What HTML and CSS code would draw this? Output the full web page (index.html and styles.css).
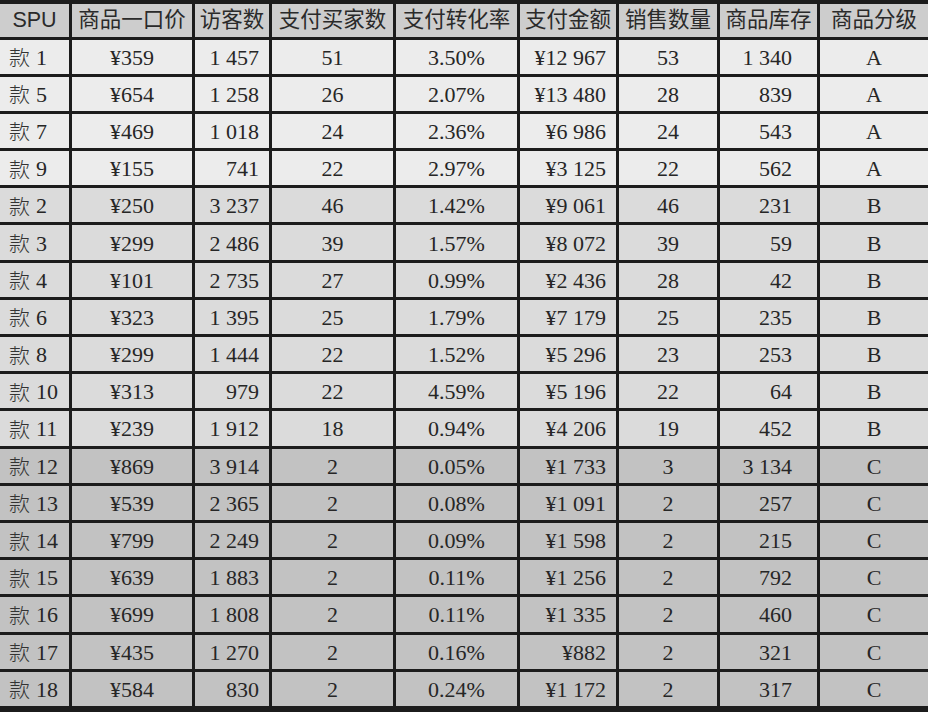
FILE: index.html
```html
<!DOCTYPE html>
<html lang="zh">
<head>
<meta charset="utf-8">
<title>SPU</title>
<link rel="stylesheet" href="styles.css">
</head>
<body>
<div class="table">
  <div class="row head">
    <div class="c spu-h">SPU</div>
    <div class="c">商品一口价</div>
    <div class="c">访客数</div>
    <div class="c">支付买家数</div>
    <div class="c">支付转化率</div>
    <div class="c">支付金额</div>
    <div class="c">销售数量</div>
    <div class="c">商品库存</div>
    <div class="c">商品分级</div>
  </div>
  <div class="row a"><div class="c spu"><span class="k">款</span><span>1</span></div><div class="c">¥359</div><div class="c r">1 457</div><div class="c">51</div><div class="c">3.50%</div><div class="c r">¥12 967</div><div class="c">53</div><div class="c r2">1 340</div><div class="c">A</div></div>
  <div class="row a"><div class="c spu"><span class="k">款</span><span>5</span></div><div class="c">¥654</div><div class="c r">1 258</div><div class="c">26</div><div class="c">2.07%</div><div class="c r">¥13 480</div><div class="c">28</div><div class="c r2">839</div><div class="c">A</div></div>
  <div class="row a"><div class="c spu"><span class="k">款</span><span>7</span></div><div class="c">¥469</div><div class="c r">1 018</div><div class="c">24</div><div class="c">2.36%</div><div class="c r">¥6 986</div><div class="c">24</div><div class="c r2">543</div><div class="c">A</div></div>
  <div class="row a"><div class="c spu"><span class="k">款</span><span>9</span></div><div class="c">¥155</div><div class="c r">741</div><div class="c">22</div><div class="c">2.97%</div><div class="c r">¥3 125</div><div class="c">22</div><div class="c r2">562</div><div class="c">A</div></div>
  <div class="row b"><div class="c spu"><span class="k">款</span><span>2</span></div><div class="c">¥250</div><div class="c r">3 237</div><div class="c">46</div><div class="c">1.42%</div><div class="c r">¥9 061</div><div class="c">46</div><div class="c r2">231</div><div class="c">B</div></div>
  <div class="row b"><div class="c spu"><span class="k">款</span><span>3</span></div><div class="c">¥299</div><div class="c r">2 486</div><div class="c">39</div><div class="c">1.57%</div><div class="c r">¥8 072</div><div class="c">39</div><div class="c r2">59</div><div class="c">B</div></div>
  <div class="row b"><div class="c spu"><span class="k">款</span><span>4</span></div><div class="c">¥101</div><div class="c r">2 735</div><div class="c">27</div><div class="c">0.99%</div><div class="c r">¥2 436</div><div class="c">28</div><div class="c r2">42</div><div class="c">B</div></div>
  <div class="row b"><div class="c spu"><span class="k">款</span><span>6</span></div><div class="c">¥323</div><div class="c r">1 395</div><div class="c">25</div><div class="c">1.79%</div><div class="c r">¥7 179</div><div class="c">25</div><div class="c r2">235</div><div class="c">B</div></div>
  <div class="row b"><div class="c spu"><span class="k">款</span><span>8</span></div><div class="c">¥299</div><div class="c r">1 444</div><div class="c">22</div><div class="c">1.52%</div><div class="c r">¥5 296</div><div class="c">23</div><div class="c r2">253</div><div class="c">B</div></div>
  <div class="row b"><div class="c spu"><span class="k">款</span><span>10</span></div><div class="c">¥313</div><div class="c r">979</div><div class="c">22</div><div class="c">4.59%</div><div class="c r">¥5 196</div><div class="c">22</div><div class="c r2">64</div><div class="c">B</div></div>
  <div class="row b"><div class="c spu"><span class="k">款</span><span>11</span></div><div class="c">¥239</div><div class="c r">1 912</div><div class="c">18</div><div class="c">0.94%</div><div class="c r">¥4 206</div><div class="c">19</div><div class="c r2">452</div><div class="c">B</div></div>
  <div class="row cc"><div class="c spu"><span class="k">款</span><span>12</span></div><div class="c">¥869</div><div class="c r">3 914</div><div class="c">2</div><div class="c">0.05%</div><div class="c r">¥1 733</div><div class="c">3</div><div class="c r2">3 134</div><div class="c">C</div></div>
  <div class="row cc"><div class="c spu"><span class="k">款</span><span>13</span></div><div class="c">¥539</div><div class="c r">2 365</div><div class="c">2</div><div class="c">0.08%</div><div class="c r">¥1 091</div><div class="c">2</div><div class="c r2">257</div><div class="c">C</div></div>
  <div class="row cc"><div class="c spu"><span class="k">款</span><span>14</span></div><div class="c">¥799</div><div class="c r">2 249</div><div class="c">2</div><div class="c">0.09%</div><div class="c r">¥1 598</div><div class="c">2</div><div class="c r2">215</div><div class="c">C</div></div>
  <div class="row cc"><div class="c spu"><span class="k">款</span><span>15</span></div><div class="c">¥639</div><div class="c r">1 883</div><div class="c">2</div><div class="c">0.11%</div><div class="c r">¥1 256</div><div class="c">2</div><div class="c r2">792</div><div class="c">C</div></div>
  <div class="row cc"><div class="c spu"><span class="k">款</span><span>16</span></div><div class="c">¥699</div><div class="c r">1 808</div><div class="c">2</div><div class="c">0.11%</div><div class="c r">¥1 335</div><div class="c">2</div><div class="c r2">460</div><div class="c">C</div></div>
  <div class="row cc"><div class="c spu"><span class="k">款</span><span>17</span></div><div class="c">¥435</div><div class="c r">1 270</div><div class="c">2</div><div class="c">0.16%</div><div class="c r">¥882</div><div class="c">2</div><div class="c r2">321</div><div class="c">C</div></div>
  <div class="row cc"><div class="c spu"><span class="k">款</span><span>18</span></div><div class="c">¥584</div><div class="c r">830</div><div class="c">2</div><div class="c">0.24%</div><div class="c r">¥1 172</div><div class="c">2</div><div class="c r2">317</div><div class="c">C</div></div>
</div>
</body>
</html>
```

FILE: styles.css
```css
html, body {
  margin: 0;
  padding: 0;
  background: #1c1c1c;
}

.table {
  width: 928px;
  height: 712px;
  box-sizing: border-box;
  border-top: 4px solid #1c1c1c;
  border-bottom: 6px solid #1c1c1c;
  background: #1c1c1c;
  display: flex;
  flex-direction: column;
  gap: 3px;
}

.row {
  display: grid;
  grid-template-columns: 69px 120px 74px 121px 121px 96px 98px 97px 108px;
  column-gap: 3px;
  height: 34.2px;
}

.row.head {
  height: 32.5px;
}

.c {
  display: flex;
  align-items: center;
  justify-content: center;
  font-family: "Liberation Serif", "Noto Sans CJK SC", serif;
  font-size: 22px;
  line-height: 1;
  color: #262626;
  white-space: nowrap;
  overflow: hidden;
  padding-top: 2px;
}

.head .c {
  background: #cdcdcd;
  font-family: "Liberation Sans", "Noto Sans CJK SC", sans-serif;
  font-size: 21.5px;
  color: #2a2a2a;
  padding-top: 1px;
}

.a .c { background: #ececec; }
.b .c { background: #dbdbdb; }
.cc .c { background: #c2c2c2; }

.c.spu {
  justify-content: flex-start;
  padding-left: 9px;
  gap: 6px;
}

.k {
  font-family: "Noto Sans CJK SC", sans-serif;
  font-weight: 300;
  font-size: 21px;
  color: #333333;
  margin-top: -2px;
}

.c.r {
  justify-content: flex-end;
  padding-right: 10px;
}

.c.r2 {
  justify-content: flex-end;
  padding-right: 25px;
}
```
